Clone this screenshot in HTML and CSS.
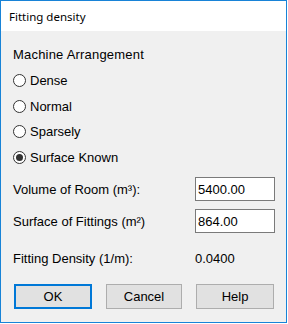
FILE: index.html
```html
<!DOCTYPE html>
<html lang="en">
<head>
    <meta charset="UTF-8">
    <meta name="viewport" content="width=device-width, initial-scale=1.0">
    <title>Fitting density</title>
    <link rel="stylesheet" href="styles.css">
</head>
<body>
<div class="window">
    <div class="titlebar">Fitting density</div>

    <div class="content">
        <div class="group-label">Machine Arrangement</div>
        <div class="radio-list">
            <label class="radio-row"><input type="radio" name="arr"><span>Dense</span></label>
            <label class="radio-row"><input type="radio" name="arr"><span>Normal</span></label>
            <label class="radio-row"><input type="radio" name="arr"><span>Sparsely</span></label>
            <label class="radio-row"><input type="radio" name="arr" checked><span>Surface Known</span></label>
        </div>

        <div class="field-row first">
            <label for="volume">Volume of Room (m³):</label>
            <input id="volume" type="text" value="5400.00">
        </div>
        <div class="field-row">
            <label for="surface">Surface of Fittings (m²)</label>
            <input id="surface" type="text" value="864.00">
        </div>

        <div class="result-row">
            <span>Fitting Density (1/m):</span>
            <span class="result-value">0.0400</span>
        </div>

        <div class="buttons">
            <button class="default">OK</button>
            <button>Cancel</button>
            <button>Help</button>
        </div>
    </div>
</div>
</body>
</html>
```

FILE: styles.css
```css
body {
    margin: 0;
    background: #fff;
    font-family: "Liberation Sans", Arial, sans-serif;
    font-size: 13px;
    color: #000;
}
.window {
    width: 287px;
    height: 323px;
    box-sizing: border-box;
    border: 1px solid #1883d7;
    background: #f0f0f0;
    display: flex;
    flex-direction: column;
}
.titlebar {
    height: 30px;
    background: #fff;
    padding-left: 8px;
    font-family: "Segoe UI", "Noto Sans", sans-serif;
    font-size: 11.5px;
    line-height: 31px;
    color: #000;
}
.content {
    flex: 1;
    padding: 16px 0 0 12px;
    line-height: 15px;
}
.group-label {
    letter-spacing: 0.2px;
}
.radio-list {
    margin-top: 6px;
    display: flex;
    flex-direction: column;
}
.radio-row {
    height: 25.5px;
    display: flex;
    align-items: center;
}
.radio-row input {
    appearance: none;
    -webkit-appearance: none;
    width: 13px;
    height: 13px;
    margin: 0 4px 0 0;
    border: 1px solid #333;
    border-radius: 50%;
    background: #fff;
    box-sizing: border-box;
    display: flex;
    align-items: center;
    justify-content: center;
}
.radio-row input:checked::after {
    content: "";
    width: 7px;
    height: 7px;
    border-radius: 50%;
    background: #333;
}
.field-row {
    display: flex;
    align-items: center;
    margin-top: 8px;
}
.field-row.first {
    margin-top: 7px;
}
.field-row label {
    width: 182px;
}
.field-row input {
    width: 80px;
    height: 24px;
    box-sizing: border-box;
    margin: 0;
    padding: 0 2px;
    border: 1px solid #7a7a7a;
    background: #fff;
    font-family: inherit;
    font-size: 13px;
    color: #000;
    outline: none;
}
.result-row {
    display: flex;
    margin-top: 18px;
}
.result-row span:first-child {
    width: 182px;
}
.buttons {
    margin-top: 18px;
    padding-left: 1px;
    display: grid;
    grid-template-columns: 78px 76px 78px;
    column-gap: 14px;
}
.buttons button {
    height: 25px;
    margin: 0;
    padding: 0;
    background: #e1e1e1;
    border: 1px solid #adadad;
    font-family: inherit;
    font-size: 13px;
    color: #000;
}
.buttons button.default {
    border: 2px solid #0078d7;
}
```
